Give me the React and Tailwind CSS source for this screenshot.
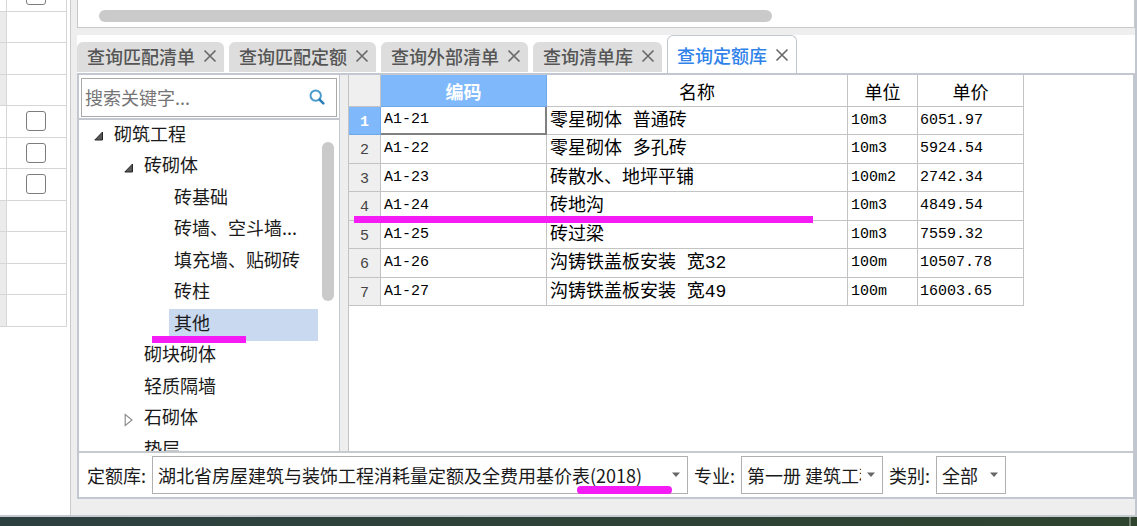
import { useState } from "react"
import clsx from "clsx"

const tabList = ["查询匹配清单", "查询匹配定额", "查询外部清单", "查询清单库", "查询定额库"]

const treeData = [
    { name: "砌筑工程", level: 0, open: true },
    { name: "砖砌体", level: 1, open: true },
    { name: "砖基础", level: 2 },
    { name: "砖墙、空斗墙...", level: 2 },
    { name: "填充墙、贴砌砖", level: 2 },
    { name: "砖柱", level: 2 },
    { name: "其他", level: 2, marked: true },
    { name: "砌块砌体", level: 1 },
    { name: "轻质隔墙", level: 1 },
    { name: "石砌体", level: 1, open: false },
    { name: "垫层", level: 1 },
]

const indent = ["pl-[10px]", "pl-10", "pl-[70px]"]

const rows = [
    { code: "A1-21", name: "零星砌体 普通砖", unit: "10m3", price: "6051.97" },
    { code: "A1-22", name: "零星砌体 多孔砖", unit: "10m3", price: "5924.54" },
    { code: "A1-23", name: "砖散水、地坪平铺", unit: "100m2", price: "2742.34" },
    { code: "A1-24", name: "砖地沟", unit: "10m3", price: "4849.54", marked: true },
    { code: "A1-25", name: "砖过梁", unit: "10m3", price: "7559.32" },
    { code: "A1-26", name: "沟铸铁盖板安装 宽32", unit: "100m", price: "10507.78" },
    { code: "A1-27", name: "沟铸铁盖板安装 宽49", unit: "100m", price: "16003.65" },
]

// rows of the left grid, true = has a checkbox
const leftRows = [true, false, false, false, true, true, true, false, false, false, false]

function CloseIcon() {
    return (
        <svg width="14" height="14" viewBox="0 0 14 14" fill="none" stroke="#6b6b6b" strokeWidth="1.7">
            <path d="M1.5 1.5l11 11M12.5 1.5l-11 11" />
        </svg>
    )
}

function SearchIcon() {
    return (
        <svg width="16" height="16" viewBox="0 0 16 16" fill="none">
            <circle cx="6.7" cy="6.6" r="5.2" stroke="#4a9bcb" strokeWidth="2" />
            <path d="M10.6 10.6l3.7 3.7" stroke="#2c7fb5" strokeWidth="2.6" strokeLinecap="round" />
        </svg>
    )
}

function Arrow({ open }) {
    if (open === undefined) return <span className="w-5 shrink-0" />
    return (
        <span className="w-5 shrink-0 flex pl-[5px]">
            {open ? (
                <svg width="10" height="10" viewBox="0 0 10 10">
                    <path d="M8.5 1v8H0.8z" fill="#595959" stroke="#262626" />
                </svg>
            ) : (
                <svg width="10" height="14" viewBox="0 0 10 14">
                    <path d="M1.2 1.5v11L8 7z" fill="#fff" stroke="#8f8f8f" strokeWidth="1.2" />
                </svg>
            )}
        </span>
    )
}

function Dropdown({ id, label, options, className, children }) {
    return (
        <div className="flex items-center gap-[6px]">
            <label htmlFor={id} className="whitespace-nowrap">{label}</label>
            <div className={clsx("relative", className)}>
                <select id={id} className="appearance-none block w-full h-[38px] pl-[5px] pr-[21px] border border-[#b0b0b0] bg-white outline-none">
                    {options.map((o) => <option key={o}>{o}</option>)}
                </select>
                <svg className="absolute right-2 top-4 pointer-events-none" width="8" height="6" viewBox="0 0 8 6">
                    <path d="M0 0.5h8L4 5z" fill="#666" />
                </svg>
                {children}
            </div>
        </div>
    )
}

export default function App() {
    const [tab, setTab] = useState(4)
    const [node, setNode] = useState(6)
    const [keyword, setKeyword] = useState("")

    return (
        <div className="h-screen flex flex-col overflow-hidden text-lg leading-6 text-[#1a1a1a] font-['Noto_Sans_CJK_SC',sans-serif]">
            <main className="flex-1 min-h-0 flex bg-[#eeeeee] border-b-2 border-[#c5c9d0]">
                <aside className="w-[71px] shrink-0 bg-white border-r border-[#cbcbcb] overflow-hidden">
                    <table className="w-[67px] -mt-[21px] table-fixed border-collapse">
                        <tbody>
                            {leftRows.map((check, i) => (
                                <tr key={i} className="odd:h-8 even:h-[31px]">
                                    <td className={clsx("w-[6px] border-r border-b border-[#d6d6d6]", !check && "bg-[#ebebeb]")} />
                                    <td className="border-r border-b border-[#d6d6d6]">
                                        {check && (
                                            <input type="checkbox" aria-label={`row ${i + 1}`} className="appearance-none block mx-auto size-5 rounded-[3px] border border-[#7d7d7d] bg-white checked:bg-[#80b9fb]" />
                                        )}
                                    </td>
                                </tr>
                            ))}
                        </tbody>
                    </table>
                </aside>

                <section className="flex-1 min-w-0 flex flex-col pl-[6px] pb-4 border-r-2 border-[#c2c6cf]">
                    <div className="h-7 shrink-0 bg-white border-x border-b border-[#c8c8c8] pt-[10px] pl-[21px]">
                        <div className="h-3 w-[65%] rounded-full bg-[#cacaca]" />
                    </div>

                    <div role="tablist" className="mt-[7px] h-[38px] shrink-0 flex items-end gap-[5px] bg-white">
                        {tabList.map((t, i) => (
                            <button
                                key={t}
                                role="tab"
                                aria-selected={tab === i}
                                onClick={() => setTab(i)}
                                className={clsx(
                                    "flex items-center gap-2 rounded-t-md font-medium whitespace-nowrap",
                                    tab === i
                                        ? "h-[38px] pl-[9px] pr-[7px] bg-white border border-b-0 border-[#c3c8d0] text-[#3083ea]"
                                        : "h-[30px] pl-[10px] pr-[7px] pb-[2px] mb-[1px] bg-[#dddddd] text-[#555555]"
                                )}
                            >
                                {t}
                                <CloseIcon />
                            </button>
                        ))}
                    </div>

                    <div className="flex-1 min-h-0 flex flex-col border-2 border-[#c3c8d0] bg-white">
                        <div className="flex-1 min-h-0 flex border-b-2 border-[#c6c9cd] bg-[#eeeeee]">
                            {/* tree */}
                            <div className="w-[261px] shrink-0 flex flex-col bg-white border-r border-[#c3c8d0]">
                                <div className="h-[45px] shrink-0 pt-[3px] px-[2px] border-b-2 border-[#c3c8d0]">
                                    <div className="h-[39px] flex items-center pl-[3px] pr-[11px] pb-[2px] border border-[#a9a9a9]">
                                        <input
                                            value={keyword}
                                            onChange={(e) => setKeyword(e.target.value)}
                                            placeholder="搜索关键字..."
                                            aria-label="搜索关键字"
                                            className="flex-1 min-w-0 outline-none placeholder:text-[#757575]"
                                        />
                                        <button aria-label="搜索"><SearchIcon /></button>
                                    </div>
                                </div>
                                <div className="relative flex-1 min-h-0 overflow-hidden">
                                    <ul className="pr-[21px]">
                                        {treeData.map((item, i) => (
                                            <li key={i} className={clsx("relative flex items-center odd:h-8 even:h-[31px]", indent[item.level])}>
                                                <Arrow open={item.open} />
                                                <button
                                                    onClick={() => setNode(i)}
                                                    className={clsx("flex-1 h-full pl-[5px] pb-[7px] text-left whitespace-nowrap", node === i && "bg-[#c9d9ef]")}
                                                >
                                                    {item.name}
                                                </button>
                                                {item.marked && <span className="absolute left-[73px] -bottom-[2px] w-[94px] h-[7px] bg-[#f41bf4] z-10" />}
                                            </li>
                                        ))}
                                    </ul>
                                    <div className="absolute right-[5px] top-[22px] w-3 h-[159px] rounded-full bg-[#cacaca]" />
                                </div>
                            </div>

                            {/* quota table */}
                            <div className="ml-2 flex-1 min-w-0 bg-white border-l border-[#c3c3c3]">
                                <table className="w-[675px] table-fixed border-separate border-spacing-0 text-black">
                                    <thead>
                                        <tr className="h-8">
                                            <th className="w-8 bg-[#efefef] border-r border-b border-[#c3c3c3]" />
                                            <th className="w-[166px] bg-[#80b9fb] text-white border-r border-b border-[#6fa8ea]">编码</th>
                                            <th className="w-[301px] font-normal border-r border-b border-[#c3c3c3]">名称</th>
                                            <th className="w-[70px] font-normal border-r border-b border-[#c3c3c3]">单位</th>
                                            <th className="font-normal border-r border-b border-[#c3c3c3]">单价</th>
                                        </tr>
                                    </thead>
                                    <tbody className="font-['Liberation_Mono','Noto_Sans_CJK_SC',monospace] text-[15px]">
                                        {rows.map((r, i) => (
                                            <tr key={r.code} className="odd:h-[28px] even:h-[29px]">
                                                <th
                                                    scope="row"
                                                    className={clsx(
                                                        "relative p-0 pt-1 leading-5 border-r border-b",
                                                        i === 0 ? "bg-[#80b9fb] text-white border-[#6fa8ea]" : "bg-[#efefef] text-[#444] font-normal border-[#c3c3c3]"
                                                    )}
                                                >
                                                    {i + 1}
                                                    {r.marked && <span className="absolute left-[5px] -bottom-[3px] w-[459px] h-[7px] bg-[#f41bf4] z-10" />}
                                                </th>
                                                <td className={clsx("p-0 pl-[3px] leading-5", i === 0 ? "border-r-2 border-b-2 border-[#808080]" : "border-r border-b border-[#c3c3c3]")}>{r.code}</td>
                                                <td className="p-0 pl-[3px] text-lg leading-5 border-r border-b border-[#c3c3c3]">{r.name}</td>
                                                <td className="p-0 pl-[3px] leading-5 border-r border-b border-[#c3c3c3]">{r.unit}</td>
                                                <td className="p-0 pl-[2px] leading-5 border-r border-b border-[#c3c3c3]">{r.price}</td>
                                            </tr>
                                        ))}
                                    </tbody>
                                </table>
                            </div>
                        </div>

                        <div className="h-11 shrink-0 flex items-center gap-[6px] px-2">
                            <Dropdown id="lib" label="定额库:" className="w-[536px]" options={["湖北省房屋建筑与装饰工程消耗量定额及全费用基价表(2018)"]}>
                                <span className="absolute left-[425px] bottom-0 w-[95px] h-2 rounded-full bg-[#f41bf4] pointer-events-none" />
                            </Dropdown>
                            <Dropdown id="major" label="专业:" className="w-[142px]" options={["第一册 建筑工程"]} />
                            <Dropdown id="kind" label="类别:" className="w-[70px]" options={["全部"]} />
                        </div>
                    </div>
                </section>
            </main>
            <footer className="h-[9px] shrink-0 flex justify-end pr-[6px] bg-linear-to-r from-[#2d4040] to-[#2f442f]">
                <span className="w-[2px] bg-[#6f7f70]" />
            </footer>
        </div>
    )
}
